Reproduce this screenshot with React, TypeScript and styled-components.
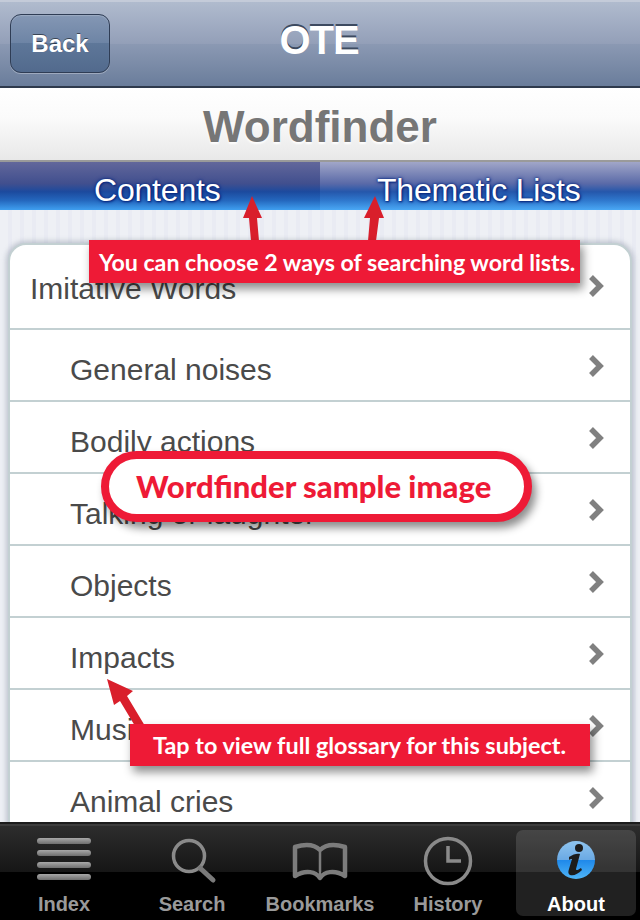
import React from "react";
import styled, { createGlobalStyle } from "styled-components";

const GlobalStyle = createGlobalStyle`
html, body {
  margin: 0;
  padding: 0;
  background: #000;
}
* {
  box-sizing: border-box;
}
`;

const Screen = styled.div`
position: relative;
width: 640px;
height: 920px;
overflow: hidden;
display: flex;
flex-direction: column;
font-family: "Liberation Sans", Arial, sans-serif;
background: repeating-linear-gradient(90deg, #eef0f5 0, #eef0f5 8px, #e9ebf3 8px, #e9ebf3 12px);
`;

const NavBar = styled.div`
position: relative;
height: 88px;
flex: none;
display: flex;
align-items: center;
justify-content: center;
padding: 0 2px 8px 0;
border-top: 2px solid #c4cbd9;
border-bottom: 2px solid #2e3a4c;
background: linear-gradient(180deg, #b0bbce 0%, #939fb8 50%, #8b99b3 50%, #6a7d9b 100%);
`;

const BackButton = styled.div`
position: absolute;
left: 10px;
top: 12px;
width: 100px;
height: 59px;
display: flex;
align-items: center;
justify-content: center;
border-radius: 11px;
border: 1px solid #2f3d55;
box-shadow: 0 1px 0 rgba(255, 255, 255, 0.3), inset 0 1px 1px rgba(255, 255, 255, 0.2);
background: linear-gradient(180deg, #8497b4 0%, #6d84a5 50%, #5e7799 50%, #526a8d 100%);
color: #fff;
font-size: 24px;
font-weight: 700;
text-shadow: 0 -1px 0 rgba(0, 0, 0, 0.5);
`;

const NavTitle = styled.div`
color: #fff;
font-size: 40px;
font-weight: 700;
letter-spacing: -1px;
text-shadow: 0 -2px 0 #3d4a60;
`;

const TitleBar = styled.div`
height: 72px;
flex: none;
display: flex;
align-items: center;
justify-content: center;
padding-top: 6px;
background: linear-gradient(180deg, #ffffff 0%, #fbfbfb 40%, #e8e8e8 100%);
color: #767676;
font-size: 44px;
font-weight: 700;
text-shadow: 0 2px 2px rgba(255, 255, 255, 0.9);
`;

const Tabs = styled.div`
height: 50px;
flex: none;
display: flex;
border-top: 2px solid #9a9a9a;
`;

const Tab = styled.div<{ $active?: boolean }>`
width: 320px;
display: flex;
padding: 10px 0 0 ${(p) => (p.$active ? "94px" : "57px")};
background: ${(p) =>
  p.$active
    ? "linear-gradient(180deg, #62679b 0%, #414f8e 45%, #1c4a9e 62%, #2467bd 80%, #3f9ff0 100%)"
    : "linear-gradient(180deg, #a1a6c8 0%, #5a6aa8 45%, #2557ab 62%, #2f78cd 80%, #4aa8f5 100%)"};
color: #fff;
font-size: 32px;
letter-spacing: -0.2px;
text-shadow: 0 0 4px #0a2a80, 0 0 2px #0a2a80, 1px 1px 2px #0a2a80;
`;

const Content = styled.div`
flex: 1;
min-height: 0;
overflow: hidden;
padding: 33px 8px 0;
`;

const List = styled.div`
background: #fff;
border: 2px solid #c3d0d2;
border-bottom: none;
border-radius: 18px 18px 0 0;
box-shadow: 0 0 5px 2px rgba(120, 130, 150, 0.4);
`;

const Row = styled.div<{ $tall?: boolean }>`
height: ${(p) => (p.$tall ? "85px" : "72px")};
display: flex;
align-items: center;
justify-content: space-between;
padding: ${(p) => (p.$tall ? "5px 32px 0 20px" : "10px 32px 0 60px")};
border-bottom: 2px solid #c3d0d2;
color: #4a4a4a;
font-size: 30px;
`;

const Chevron = styled.svg<{ $tall?: boolean }>`
width: 16px;
height: 22px;
flex: none;
margin-right: -6px;
margin-top: ${(p) => (p.$tall ? "-6px" : "-8px")};
`;

const TabBar = styled.div`
position: absolute;
left: 0;
right: 0;
bottom: 0;
height: 98px;
display: flex;
gap: 8px;
padding: 6px 4px 4px;
border-top: 2px solid #1c1c1c;
box-shadow: inset 0 2px 0 #3c3c3c;
background: linear-gradient(180deg, #2e2e2e 0%, #161616 50%, #000 50%, #000 100%);
`;

const TabItem = styled.div<{ $active?: boolean }>`
flex: 1;
display: flex;
flex-direction: column;
align-items: center;
justify-content: space-between;
border-radius: 7px;
color: ${(p) => (p.$active ? "#fff" : "#9a9a9a")};
font-size: 20px;
font-weight: 700;
background: ${(p) => (p.$active ? "rgba(255,255,255,0.13)" : "transparent")};
`;

const IconSlot = styled.div`
height: 50px;
margin-top: 6px;
display: flex;
align-items: center;
justify-content: center;
`;

const CalloutBox = styled.div<{ $left: number; $top: number; $width: number; $height: number; $size: number; $inset: number }>`
position: absolute;
left: ${(p) => p.$left}px;
top: ${(p) => p.$top}px;
width: ${(p) => p.$width}px;
height: ${(p) => p.$height}px;
display: flex;
align-items: center;
padding-left: ${(p) => p.$inset}px;
background: #ee1a36;
color: #fff;
font-family: Lato, sans-serif;
font-size: ${(p) => p.$size}px;
font-weight: 700;
white-space: nowrap;
box-shadow: 3px 6px 9px rgba(0, 0, 0, 0.45);
`;

const Pill = styled.div`
position: absolute;
left: 101px;
top: 451px;
width: 431px;
height: 71px;
display: flex;
align-items: center;
padding: 0 0 2px 27px;
background: #fff;
border: 8px solid #ee1a36;
border-radius: 36px;
color: #ee1a36;
font-family: Lato, sans-serif;
font-size: 31px;
font-weight: 900;
white-space: nowrap;
box-shadow: 4px 6px 8px rgba(0, 0, 0, 0.45);
`;

const Arrow = styled.svg`
position: absolute;
left: 0;
top: 0;
width: 640px;
height: 920px;
pointer-events: none;
`;

const rows = ["General noises", "Bodily actions", "Talking or laughter", "Objects", "Impacts", "Music", "Animal cries", "Other"];

const ChevronIcon = ({ tall }: { tall?: boolean }) => (
  <Chevron $tall={tall} viewBox="0 0 16 22">
    <path d="M3 2l9 9-9 9" fill="none" stroke="#808080" strokeWidth="5.5" />
  </Chevron>
);

const App = () => {
  return (
    <Screen>
      <GlobalStyle />
      <NavBar>
        <BackButton>Back</BackButton>
        <NavTitle>OTE</NavTitle>
      </NavBar>
      <TitleBar>Wordfinder</TitleBar>
      <Tabs>
        <Tab $active>Contents</Tab>
        <Tab>Thematic Lists</Tab>
      </Tabs>
      <Content>
        <List>
          <Row $tall>
            Imitative Words
            <ChevronIcon tall />
          </Row>
          {rows.map((r) => (
            <Row key={r}>
              {r}
              <ChevronIcon />
            </Row>
          ))}
        </List>
      </Content>

      <Arrow viewBox="0 0 640 920">
        <path d="M252 196l10 22h-5l2 23h-8l-2-23h-6z" fill="#d91f2b" />
        <path d="M375 196l9 22h-5l-3 23h-8l2-23h-6z" fill="#d91f2b" />
        <path d="M107 679l26 12-6 5 18 30-7 5-18-30-6 4z" fill="#d91f2b" />
      </Arrow>
      <CalloutBox $left={89} $top={240} $width={491} $height={43} $size={23.2} $inset={10}>
        You can choose 2 ways of searching word lists.
      </CalloutBox>
      <Pill>Wordfinder sample image</Pill>
      <CalloutBox $left={130} $top={724} $width={460} $height={42} $size={23.4} $inset={23}>
        Tap to view full glossary for this subject.
      </CalloutBox>

      <TabBar>
        <TabItem>
          <IconSlot>
            <svg width="56" height="46" viewBox="0 0 56 46">
              <defs>
                <linearGradient id="bars" x1="0" y1="0" x2="0" y2="1">
                  <stop offset="0" stopColor="#a8a8a8" />
                  <stop offset="1" stopColor="#6e6e6e" />
                </linearGradient>
              </defs>
              <rect x="1" y="0" width="54" height="6" rx="3" fill="url(#bars)" />
              <rect x="1" y="12" width="54" height="6" rx="3" fill="url(#bars)" />
              <rect x="1" y="24" width="54" height="6" rx="3" fill="url(#bars)" />
              <rect x="1" y="36" width="54" height="6" rx="3" fill="url(#bars)" />
            </svg>
          </IconSlot>
          Index
        </TabItem>
        <TabItem>
          <IconSlot>
            <svg width="50" height="48" viewBox="0 0 50 48">
              <circle cx="22" cy="19" r="15.5" fill="none" stroke="#8a8a8a" strokeWidth="3.5" />
              <path d="M33 31l13 12" stroke="#7a7a7a" strokeWidth="5" strokeLinecap="round" />
            </svg>
          </IconSlot>
          Search
        </TabItem>
        <TabItem>
          <IconSlot>
            <svg width="56" height="40" viewBox="0 0 56 40">
              <path
                d="M28 9C24 5 16 2 3 6V35C14 28 24 31 28 37C32 31 42 28 53 35V6C40 2 32 5 28 9Z"
                fill="none"
                stroke="#7c7c7c"
                strokeWidth="4.5"
                strokeLinejoin="round"
              />
              <path d="M28 9V37" stroke="#7c7c7c" strokeWidth="2.5" />
            </svg>
          </IconSlot>
          Bookmarks
        </TabItem>
        <TabItem>
          <IconSlot>
            <svg width="50" height="50" viewBox="0 0 50 50">
              <circle cx="25" cy="25" r="22.5" fill="none" stroke="#8a8a8a" strokeWidth="3.5" />
              <path d="M25 10v15h13" fill="none" stroke="#8a8a8a" strokeWidth="3.5" />
            </svg>
          </IconSlot>
          History
        </TabItem>
        <TabItem $active>
          <IconSlot>
            <svg width="40" height="42" viewBox="0 0 40 42">
              <defs>
                <linearGradient id="info" x1="0" y1="0" x2="0" y2="1">
                  <stop offset="0" stopColor="#8fc4ee" />
                  <stop offset="0.5" stopColor="#6aa9e4" />
                  <stop offset="0.5" stopColor="#1e88ea" />
                  <stop offset="1" stopColor="#4fb5f7" />
                </linearGradient>
              </defs>
              <circle cx="20" cy="20" r="19" fill="url(#info)" />
              <circle cx="23" cy="8" r="4" fill="#1c1c1c" />
              <path
                d="M13 17c4-3 9-4 11-3l-4 15c0 2 2 1 5-1l1 2c-4 4-8 6-12 5-2-1-2-3-1-6l3-10c-1 0-2 0-3 1z"
                fill="#1c1c1c"
              />
            </svg>
          </IconSlot>
          About
        </TabItem>
      </TabBar>
    </Screen>
  );
};

export default App;
